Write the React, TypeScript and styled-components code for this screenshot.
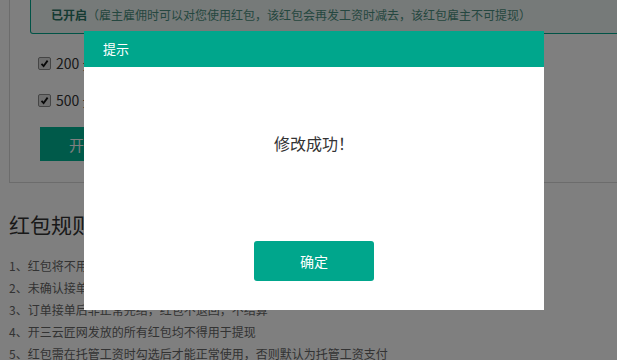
import React from 'react';
import styled, { createGlobalStyle } from 'styled-components';

const GlobalStyle = createGlobalStyle`
  html, body {
    margin: 0;
    padding: 0;
    background: #fff;
    overflow: hidden;
    font-family: "Noto Sans CJK SC", "Noto Sans", sans-serif;
  }
`;

const teal = '#00a68c';

const Page = styled.div`
  width: 1100px;
  padding-left: 9px;
`;

const SettingBox = styled.div`
  border: 1px solid #d8d8d8;
  border-top: 0;
  padding: 0 20px 21px;
`;

const Notice = styled.div`
  border: 1px solid ${teal};
  border-top: 0;
  border-radius: 0 0 3px 3px;
  background: #ecf4f2;
  padding: 5px 20px 8px;
  font-size: 12px;
  line-height: 20px;
  color: #4a8f80;

  b {
    color: #2a7565;
    font-weight: bold;
  }
`;

const OptionRow = styled.label<{ $first?: boolean }>`
  display: flex;
  align-items: center;
  gap: 5px;
  margin: ${(p) => (p.$first ? '19px' : '17px')} 0 0 8px;
  font-size: 14px;
  line-height: 20px;
  color: #333;
`;

const CheckBox = styled.span`
  display: inline-flex;
  align-items: center;
  justify-content: center;
  box-sizing: border-box;
  width: 13px;
  height: 13px;
  border: 1px solid #8a8a8a;
  border-radius: 2px;
  background: #dcdcdc;

  svg {
    display: block;
  }
`;

const OpenButton = styled.button`
  display: block;
  margin: 17px 0 0 10px;
  width: 118px;
  height: 34px;
  border: 0;
  background: #00b494;
  color: #fff;
  font-family: inherit;
  font-size: 15px;
`;

const RuleTitle = styled.h2`
  margin: 26px 0 0;
  font-size: 21px;
  line-height: 30px;
  font-weight: normal;
  color: #333;
`;

const RuleList = styled.ol`
  list-style: none;
  margin: 16px 0 0;
  padding: 0;
  font-size: 12px;
  line-height: 22px;
  color: #666;
`;

const Overlay = styled.div`
  position: fixed;
  inset: 0;
  background: rgba(0, 0, 0, 0.5);
`;

const Dialog = styled.div`
  position: fixed;
  left: 84px;
  top: 31px;
  width: 460px;
  background: #fff;
`;

const DialogHeader = styled.div`
  height: 36px;
  padding-left: 19px;
  background: ${teal};
  color: #fff;
  font-size: 13px;
  line-height: 36px;
`;

const DialogBody = styled.div`
  display: flex;
  flex-direction: column;
  align-items: center;
  padding: 64px 0 29px;
`;

const Message = styled.p`
  margin: 0;
  font-size: 16px;
  line-height: 24px;
  color: #333;
`;

const ConfirmButton = styled.button`
  margin-top: 86px;
  width: 120px;
  height: 40px;
  border: 0;
  border-radius: 3px;
  background: ${teal};
  color: #fff;
  font-family: inherit;
  font-size: 14px;
`;

const rules = [
  '1、红包将不用于托管工资的支付，雇佣后即可使用',
  '2、未确认接单的订单，红包将会原路退回',
  '3、订单接单后非正常完结，红包不退回，不结算',
  '4、开三云匠网发放的所有红包均不得用于提现',
  '5、红包需在托管工资时勾选后才能正常使用，否则默认为托管工资支付',
];

const Tick = () => (
  <CheckBox>
    <svg width="9" height="9" viewBox="0 0 9 9">
      <path d="M1.5 4.8 L3.6 7 L7.6 1.6" fill="none" stroke="#111" strokeWidth="1.8" />
    </svg>
  </CheckBox>
);

export default function App() {
  return (
    <>
      <GlobalStyle />
      <Page>
        <SettingBox>
          <Notice>
            <b>已开启</b>（雇主雇佣时可以对您使用红包，该红包会再发工资时减去，该红包雇主不可提现）
          </Notice>
          <OptionRow $first>
            <Tick />
            200 元红包
          </OptionRow>
          <OptionRow>
            <Tick />
            500 元红包
          </OptionRow>
          <OpenButton>开启红包</OpenButton>
        </SettingBox>
        <RuleTitle>红包规则</RuleTitle>
        <RuleList>
          {rules.map((r) => (
            <li key={r}>{r}</li>
          ))}
        </RuleList>
      </Page>
      <Overlay />
      <Dialog>
        <DialogHeader>提示</DialogHeader>
        <DialogBody>
          <Message>修改成功！</Message>
          <ConfirmButton>确定</ConfirmButton>
        </DialogBody>
      </Dialog>
    </>
  );
}
